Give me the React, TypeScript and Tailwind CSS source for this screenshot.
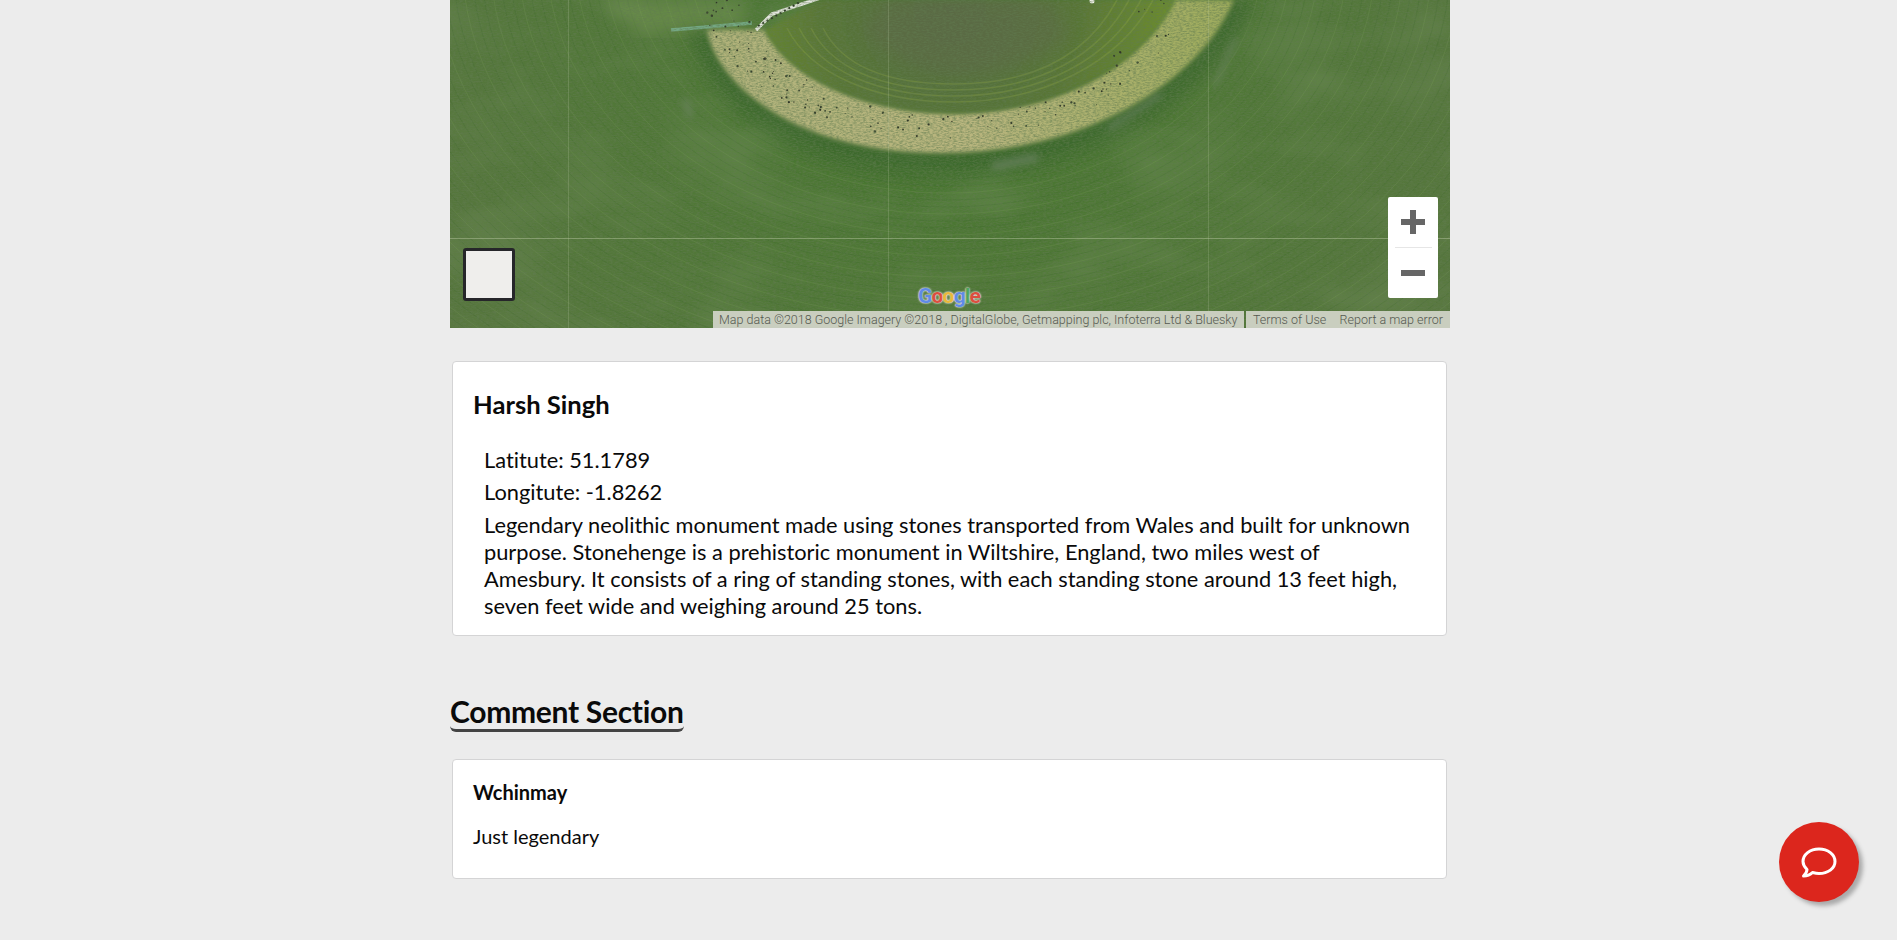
// small seeded generator so the crowd on the bank stays put between renders
const rand = (seed: number) => {
  const x = Math.sin(seed * 127.1) * 43758.5453;
  return x - Math.floor(x);
};

// visitors on the pale bank, denser on the left and thinning out to the right
const people = Array.from({ length: 170 }, (_, i) => {
  const t = Math.pow(rand(i + 1), 1.5);
  const band = rand(i + 300);
  const angle = Math.PI * (1.02 - t * 1.02);
  const rx = 190 + band * 40 + (1 - t) * 14;
  const ry = 118 + band * 26;
  return {
    x: 497 + Math.cos(angle) * rx,
    y: -5 + Math.sin(angle) * ry,
    r: 0.5 + rand(i + 600) * 0.7,
  };
}).filter((p) => p.y > 0);

const arcs = Array.from({ length: 70 }, (_, i) => 170 + i * 7);

const MapImagery = () => (
  <svg viewBox="0 0 1000 328" className="block h-full w-full" preserveAspectRatio="none">
    <defs>
      <radialGradient id="field" gradientUnits="userSpaceOnUse" cx="500" cy="40" r="620">
        <stop offset="0" stopColor="#42742b" />
        <stop offset="0.4" stopColor="#4f7836" />
        <stop offset="1" stopColor="#58763f" />
      </radialGradient>
      <radialGradient id="mound" gradientUnits="userSpaceOnUse" cx="500" cy="10" r="210">
        <stop offset="0" stopColor="#566c42" />
        <stop offset="0.6" stopColor="#587536" />
        <stop offset="1" stopColor="#6a8a2e" />
      </radialGradient>
      <linearGradient id="bank" x1="0" x2="1" y1="0" y2="0">
        <stop offset="0" stopColor="#b0b27a" />
        <stop offset="0.5" stopColor="#b9b67f" />
        <stop offset="1" stopColor="#9dab5c" />
      </linearGradient>
      <filter id="grain" x="0" y="0" width="100%" height="100%">
        <feTurbulence type="fractalNoise" baseFrequency="0.3 0.8" numOctaves="3" seed="4" />
        <feColorMatrix
          type="matrix"
          values="0 0 0 0 0.12  0 0 0 0 0.2  0 0 0 0 0.08  2.4 0 0 0 -0.85"
        />
      </filter>
      <filter id="patch" x="0" y="0" width="100%" height="100%">
        <feTurbulence type="fractalNoise" baseFrequency="0.009 0.018" numOctaves="3" seed="21" />
        <feColorMatrix
          type="matrix"
          values="0 0 0 0 0.36  0 0 0 0 0.46  0 0 0 0 0.26  1.6 0 0 0 -0.7"
        />
      </filter>
      <filter id="soft">
        <feGaussianBlur stdDeviation="8" />
      </filter>
      <filter id="soft2">
        <feGaussianBlur stdDeviation="2" />
      </filter>
      <filter id="soft3">
        <feGaussianBlur stdDeviation="3.500" />
      </filter>
    </defs>

    <rect width="1000" height="328" fill="url(#field)" />
    <rect width="1000" height="328" filter="url(#patch)" opacity="0.25" />

    {/* mowing rings */}
    {arcs.map((r, i) => (
      <ellipse
        key={r}
        cx="497"
        cy="-40"
        rx={r * 1.35}
        ry={r}
        fill="none"
        stroke={i % 3 === 0 ? "#92b06c" : "#34602a"}
        strokeWidth="1"
        opacity={i % 3 === 0 ? 0.18 : 0.2}
      />
    ))}

    {/* paler corner by the path and dark ring under the bank */}
    <path d="M150 0 L300 0 L290 30 L190 34 Z" fill="#7a9a58" opacity="0.5" filter="url(#soft)" />
    <path
      d="M240 30 C250 100 340 176 491 176 C650 176 770 90 805 0 L770 0 L500 140 L260 30 Z"
      fill="#37652a"
      opacity="0.7"
      filter="url(#soft)"
    />

    {/* greyer scuffs in the ditch */}
    <g stroke="#7d8d7a" fill="none" strokeLinecap="round" filter="url(#soft3)" opacity="0.55">
      <path d="M545 166 L585 158" strokeWidth="8" />
      <path d="M660 128 L710 95" strokeWidth="5" />
      <path d="M765 85 L785 40" strokeWidth="4" />
      <path d="M235 100 L240 115" strokeWidth="5" />
    </g>

    {/* the bank */}
    <path
      d="M257 30 C265 80 340 153 491 153 C640 153 750 80 784 0 L725 0 C690 70 600 113 504 113 C420 113 340 80 315 30 Z"
      fill="url(#bank)"
      filter="url(#soft2)"
    />

    {/* inside the ring */}
    <path
      d="M315 30 C340 80 420 113 504 113 C600 113 690 70 725 0 L370 0 Z"
      fill="url(#mound)"
      filter="url(#soft2)"
    />
    <path d="M410 30 C470 90 560 85 620 35 L600 0 L440 0 Z" fill="#5f6848" opacity="0.5" filter="url(#soft)" />
    {[1, 2, 3, 4].map((n) => (
      <path
        key={n}
        d={`M${325 + n * 12} 28 C${350 + n * 10} ${78 - n * 4} ${425 + n} ${108 - n * 6} 504 ${108 - n * 6} C${595 - n} ${108 - n * 6} ${680 - n * 10} ${66 - n * 4} ${715 - n * 12} 0`}
        fill="none"
        stroke="#8ea64a"
        strokeWidth="1.6"
        opacity="0.35"
      />
    ))}

    {/* walkway */}
    <path d="M221 30 L302 23" stroke="#7fb8a0" strokeWidth="3.500" opacity="0.7" />
    <path d="M306 30 L322 14 L370 -2" stroke="#e4e6df" strokeWidth="3.500" fill="none" />
    <path d="M308 26 L350 2" stroke="#2c3a25" strokeWidth="2" strokeDasharray="2 3" fill="none" />
    <circle cx="642" cy="1" r="2.500" fill="#f4f4ee" />

    {people.map((p, i) => (
      <circle key={i} cx={p.x} cy={p.y} r={p.r} fill="#2f3527" />
    ))}

    <rect width="1000" height="328" filter="url(#grain)" opacity="0.55" />

    {/* tile seams */}
    <g stroke="#c7d3b0" opacity="0.2" strokeWidth="1">
      <path d="M118.500 0 V328" />
      <path d="M438.500 0 V328" />
      <path d="M758.500 0 V328" />
    </g>
    <path d="M0 238.500 H1000" stroke="#c7d3b0" opacity="0.4" strokeWidth="1" />
  </svg>
);

const GoogleMark = () => (
  <div className="absolute bottom-[20px] left-[468px] font-['Roboto',sans-serif] text-[21px] leading-[24px] font-bold tracking-[-0.8px] [text-shadow:0_0_2px_#e6e6e6,0_0_2px_#e6e6e6]">
    <span className="text-[#5f8be6]">G</span>
    <span className="text-[#dc4f3f]">o</span>
    <span className="text-[#e8b93a]">o</span>
    <span className="text-[#5f8be6]">g</span>
    <span className="text-[#4da65a]">l</span>
    <span className="text-[#dc4f3f]">e</span>
  </div>
);

const MapFrame = () => (
  <div className="relative h-[328px] w-full overflow-hidden">
    <MapImagery />

    {/* street view / pegman box */}
    <div className="absolute bottom-[27px] left-[13px] h-[53px] w-[52px] rounded-[3px] border-[3px] border-[#26262a] bg-[#efeeec]" />

    {/* zoom control */}
    <div className="absolute right-3 bottom-[30px] flex h-[101px] w-[50px] flex-col items-center rounded-[2px] bg-white">
      <div className="flex h-[50px] w-full items-center justify-center">
        <svg width="24" height="24" viewBox="0 0 24 24" fill="#666">
          <rect x="9" y="0" width="6" height="24" />
          <rect x="0" y="9" width="24" height="6" />
        </svg>
      </div>
      <div className="h-px w-[37px] bg-[#e6e6e6]" />
      <div className="flex h-[50px] w-full items-center justify-center">
        <svg width="24" height="24" viewBox="0 0 24 24" fill="#666">
          <rect x="0" y="9" width="24" height="6" />
        </svg>
      </div>
    </div>

    <GoogleMark />

    {/* attribution strip */}
    <div className="absolute right-0 bottom-0 flex h-[17px] items-center font-['Roboto',sans-serif] text-[12.500px] leading-[17px] font-light text-[#555950]">
      <div className="h-full w-[531px] overflow-hidden bg-[#c9cebf] pl-[6px] whitespace-nowrap">
        Map data ©2018 Google Imagery ©2018 , DigitalGlobe, Getmapping plc, Infoterra Ltd &amp; Bluesky
      </div>
      <div className="ml-[2px] flex h-full w-[204px] justify-between bg-[#c9cebf] px-[7px] whitespace-nowrap">
        <span>Terms of Use</span>
        <span>Report a map error</span>
      </div>
    </div>
  </div>
);

const ChatBubble = () => (
  <svg width="36" height="31" viewBox="0 0 36 31" fill="none">
    <path
      d="M18 2 C27 2 34 7.500 34 14.500 C34 21.500 27 26.500 18 26.500 C15.500 26.500 13.500 26 11.500 25.500 C9 28 5.500 29 2.500 29 C4.500 27 6 24.500 6 22.500 C3.500 20 2 17.500 2 14.500 C2 7.500 9 2 18 2 Z"
      stroke="white"
      strokeWidth="3"
      strokeLinejoin="round"
    />
  </svg>
);

export default function App() {
  return (
    <div className="min-h-[940px] bg-[#ececec] font-['Lato',sans-serif] text-[#0a0a0a] [font-variant-ligatures:none]">
      <div className="ml-[450px] w-[1000px] pb-[61px]">
        <MapFrame />

        {/* Place details */}
        <section className="mr-[3px] ml-0.5 mt-[33px] rounded-[4px] border border-[#d4d4d5] bg-white px-5 pt-[27px] pb-[16px]">
          <h2 className="text-[25.600px] leading-[30px] font-bold">Harsh Singh</h2>
          <div className="mt-[27px] pl-[11px] pr-[10px] text-[21.800px] leading-[27px]">
            <p>Latitute: 51.1789</p>
            <p className="mt-[5px]">Longitute: -1.8262</p>
            <p className="mt-[6px]">
              Legendary neolithic monument made using stones transported from Wales and built for unknown
              purpose. Stonehenge is a prehistoric monument in Wiltshire, England, two miles west of
              Amesbury. It consists of a ring of standing stones, with each standing stone around 13 feet high,
              seven feet wide and weighing around 25 tons.
            </p>
          </div>
        </section>

        {/* Comments */}
        <h2 className="mt-[57px] inline-block rounded-b-[6px] border-b-[3px] border-[#444] text-[30px] leading-[36px] font-bold tracking-[-0.3px]">
          Comment Section
        </h2>

        <section className="mr-[3px] ml-0.5 mt-[27px] h-[120px] rounded-[4px] border border-[#d4d4d5] bg-white px-5 pt-[20px]">
          <h3 className="text-[20px] leading-[24px] font-bold">Wchinmay</h3>
          <p className="mt-[20px] text-[20px] leading-[24px]">Just legendary</p>
        </section>
      </div>

      {/* floating chat button */}
      <button className="fixed right-[38px] bottom-[38px] flex h-[80px] w-[80px] items-center justify-center rounded-full bg-[#dc261d] shadow-[4px_4px_4px_#aaaaaa]">
        <ChatBubble />
      </button>
    </div>
  );
}
